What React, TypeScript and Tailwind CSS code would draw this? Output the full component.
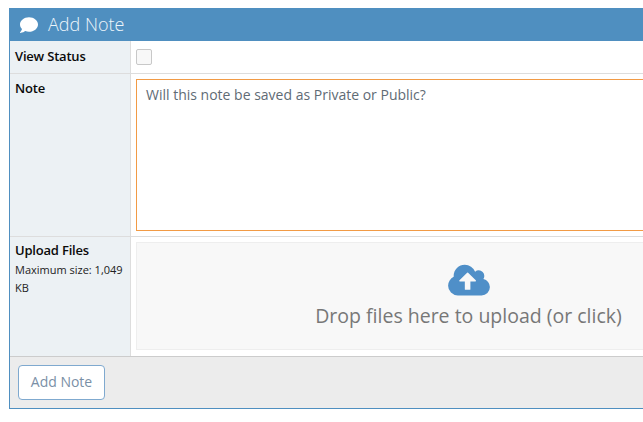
import { FaComment } from "react-icons/fa";

const labelCell = "w-[121px] shrink-0 bg-[#ecf1f4] border-r border-[#dddddd] pl-[5px] pr-1";
const labelText = "text-[13px] tracking-[-0.2px] leading-5 font-semibold text-[#0a0a0a]";

const CloudUpload = () => (
  <svg viewBox="0 0 1920 1792" className="w-[42px] h-[39px] fill-[#4f8fc8]">
    <path
      fillRule="evenodd"
      d="M1280 864q0-14-9-23l-352-352q-9-9-23-9t-23 9l-351 351q-10 12-10 24 0 14 9 23t23 9h224v352q0 13 9.500 22.500t22.500 9.500h192q13 0 22.500-9.500t9.500-22.500v-352h224q13 0 22.500-9.500t9.500-22.500zm640 288q0 159-112.500 271.500t-271.500 112.500h-1088q-185 0-316.500-131.500t-131.500-316.500q0-130 70-240t188-165q-2-30-2-43 0-212 150-362t362-150q156 0 285.500 87t188.500 231q71-62 166-62 106 0 181 75t75 181q0 76-41 138 130 31 213.500 135.500t83.500 238.500z"
    />
  </svg>
);

export default function App() {
  return (
    <div className="w-[643px] h-[422px] overflow-hidden bg-white pt-2 pl-[9px] font-['Open_Sans',sans-serif]">
      <div className="w-[798px] border border-[#4f8fc0] border-t-0">
        <div className="-mx-px h-[33px] bg-[#4f8fc0] flex items-center pl-[11px] gap-[10px] text-white">
          <FaComment className="w-[18px] h-[18px]" />
          <span className="text-[18px] font-light leading-6 text-[#edf5fb] -mt-0.5">Add Note</span>
        </div>

        <div className="flex h-[33px] border-b border-[#dddddd]">
          <div className={`${labelCell} pt-[5px]`}>
            <div className={labelText}>View Status</div>
          </div>
          <div className="flex-1 pl-[5px] pt-2">
            <div className="w-4 h-4 border border-[#c8c8c8] rounded-[2px] bg-[#f8f8f8]" />
          </div>
        </div>

        <div className="flex h-[163px] border-b border-[#dddddd]">
          <div className={`${labelCell} pt-1`}>
            <div className={labelText}>Note</div>
          </div>
          <div className="flex-1 px-[5px] pt-[5px]">
            <div className="h-[152px] border border-[#f29b45] pl-[9px] pt-[5px] text-[14px] leading-5 text-[#5f6b75]">
              Will this note be saved as Private or Public?
            </div>
          </div>
        </div>

        <div className="flex h-[120px] border-b border-[#cccccc]">
          <div className={`${labelCell} pt-[3px]`}>
            <div className={labelText}>Upload Files</div>
            <div className="text-[11px] leading-[18px] mt-px text-[#222222]">Maximum size: 1,049 KB</div>
          </div>
          <div className="flex-1 px-[5px] pt-[5px]">
            <div className="h-[108px] border border-[#eeeeee] bg-[#f8f8f8] flex flex-col items-center pt-[19px]">
              <CloudUpload />
              <span className="text-[19.5px] leading-7 mt-px text-[#777777]">Drop files here to upload (or click)</span>
            </div>
          </div>
        </div>

        <div className="h-[51px] bg-[#ececec] pl-2 pt-2">
          <button className="w-[87px] h-[35px] bg-white border border-[#7fa9cf] rounded-[4px] text-[14px] leading-5 pb-0.5 text-[#7a8fa6]">
            Add Note
          </button>
        </div>
      </div>
    </div>
  );
}
